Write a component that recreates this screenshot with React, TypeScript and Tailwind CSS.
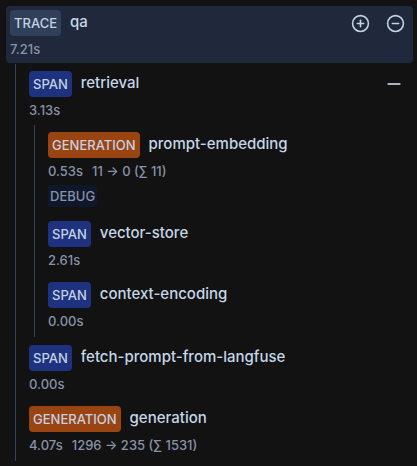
import { CircleMinus, CirclePlus, Minus } from "lucide-react";
import clsx from "clsx";

type ObservationType = "TRACE" | "SPAN" | "GENERATION";

interface TreeNode {
  id: string;
  type: ObservationType;
  name: string;
  latency: string;
  usage?: string;
  level?: string;
  collapsible?: boolean;
  children?: TreeNode[];
}

const trace: TreeNode = {
  id: "trace",
  type: "TRACE",
  name: "qa",
  latency: "7.21s",
  children: [
    {
      id: "retrieval",
      type: "SPAN",
      name: "retrieval",
      latency: "3.13s",
      collapsible: true,
      children: [
        {
          id: "prompt-embedding",
          type: "GENERATION",
          name: "prompt-embedding",
          latency: "0.53s",
          usage: "11 → 0 (∑ 11)",
          level: "DEBUG",
        },
        { id: "vector-store", type: "SPAN", name: "vector-store", latency: "2.61s" },
        { id: "context-encoding", type: "SPAN", name: "context-encoding", latency: "0.00s" },
      ],
    },
    { id: "fetch-prompt", type: "SPAN", name: "fetch-prompt-from-langfuse", latency: "0.00s" },
    {
      id: "generation",
      type: "GENERATION",
      name: "generation",
      latency: "4.07s",
      usage: "1296 → 235 (∑ 1531)",
    },
  ],
};

const badgeColors: Record<ObservationType, string> = {
  TRACE: "bg-[#30405a]",
  SPAN: "bg-[#1e327f]",
  GENERATION: "bg-[#9a4412]",
};

const ObservationNode = ({ node, root = false }: { node: TreeNode; root?: boolean }) => (
  <li>
    <div className={clsx("rounded px-1 pt-1 pb-1.5", root && "bg-[#1f293b]")}>
      <div className="flex items-center">
        <span
          className={clsx(
            "rounded px-1 text-[13px] leading-[26px] font-medium text-[#c5d2e2]",
            badgeColors[node.type]
          )}
        >
          {node.type}
        </span>
        <span className="ml-[9px] min-w-0 flex-1 self-start truncate text-[15px] leading-6 font-medium text-[#c5d6e8]">
          {node.name}
        </span>
        {root && (
          <div className="flex gap-4 pr-1 text-[#c5d2e2]">
            <button type="button" aria-label="Expand all">
              <CirclePlus size={19} strokeWidth={2} />
            </button>
            <button type="button" aria-label="Collapse all">
              <CircleMinus size={19} strokeWidth={2} />
            </button>
          </div>
        )}
        {node.collapsible && (
          <button type="button" aria-label="Collapse" className="pr-1 text-[#b3c5d6]">
            <Minus size={22} strokeWidth={2} strokeLinecap="butt" />
          </button>
        )}
      </div>

      <div className="mt-[5px] flex gap-[9px] text-[13px] leading-4 font-medium text-[#8793a8]">
        <span>{node.latency}</span>
        {node.usage && <span>{node.usage}</span>}
      </div>

      {node.level && (
        <div className="mt-1.5 flex">
          <span className="rounded bg-[#0f172a] px-0.5 text-[13px] leading-[22px] font-medium text-[#8793a8]">
            {node.level}
          </span>
        </div>
      )}
    </div>

    {node.children && (
      <ul className="mt-px ml-[9px] flex flex-col gap-1 border-l border-[#334155] pt-[3px] pb-0.5 pl-[9px]">
        {node.children.map((child) => (
          <ObservationNode key={child.id} node={child} />
        ))}
      </ul>
    )}
  </li>
);

const App = () => {
  return (
    <main className="min-h-screen bg-[#121212] pt-1.5 pr-1 pl-1.5 font-['Inter',sans-serif]">
      <ul>
        <ObservationNode node={trace} root />
      </ul>
    </main>
  );
};

export default App;
